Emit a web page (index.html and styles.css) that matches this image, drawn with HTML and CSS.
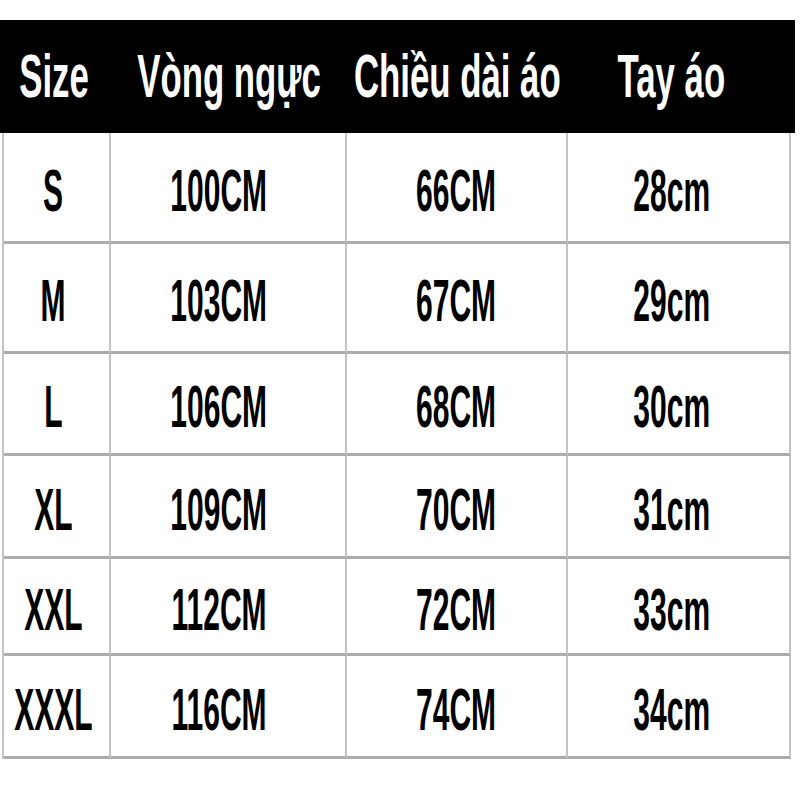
FILE: index.html
```html
<!DOCTYPE html>
<html lang="vi">
<head>
<meta charset="utf-8">
<title>Bảng size</title>
<link rel="stylesheet" href="styles.css">
</head>
<body>
<div class="chart">
  <div class="head">
    <div class="hc c1"><span>Size</span></div>
    <div class="hc c2"><span>Vòng ngực</span></div>
    <div class="hc c3"><span>Chiều dài áo</span></div>
    <div class="hc c4"><span>Tay áo</span></div>
  </div>
  <div class="grid">
    <div class="cell c1"><span>S</span></div>
    <div class="cell c2"><span>100CM</span></div>
    <div class="cell c3"><span>66CM</span></div>
    <div class="cell c4"><span>28cm</span></div>

    <div class="cell c1"><span>M</span></div>
    <div class="cell c2"><span>103CM</span></div>
    <div class="cell c3"><span>67CM</span></div>
    <div class="cell c4"><span>29cm</span></div>

    <div class="cell c1"><span>L</span></div>
    <div class="cell c2"><span>106CM</span></div>
    <div class="cell c3"><span>68CM</span></div>
    <div class="cell c4"><span>30cm</span></div>

    <div class="cell c1"><span>XL</span></div>
    <div class="cell c2"><span>109CM</span></div>
    <div class="cell c3"><span>70CM</span></div>
    <div class="cell c4"><span>31cm</span></div>

    <div class="cell c1"><span>XXL</span></div>
    <div class="cell c2"><span>112CM</span></div>
    <div class="cell c3"><span>72CM</span></div>
    <div class="cell c4"><span>33cm</span></div>

    <div class="cell c1"><span>XXXL</span></div>
    <div class="cell c2"><span>116CM</span></div>
    <div class="cell c3"><span>74CM</span></div>
    <div class="cell c4"><span>34cm</span></div>
  </div>
</div>
</body>
</html>
```

FILE: styles.css
```css
* { box-sizing: border-box; }

body {
  margin: 0;
  background: #fff;
  font-family: "Liberation Sans", Arial, sans-serif;
}

.chart {
  padding-top: 20px;
}

.head {
  display: grid;
  grid-template-columns: 111px 236px 221px 227px;
  width: 795px;
  height: 113px;
  background: #000;
}

.hc {
  display: flex;
  align-items: center;
  justify-content: center;
  color: #fff;
  font-size: 61px;
  font-weight: 700;
  line-height: 1;
  white-space: nowrap;
}

.hc span {
  display: inline-block;
  flex-shrink: 0;
  transform: scaleX(0.57);
}

.hc.c1 { padding-right: 3px; }
.hc.c4 { padding-right: 21px; }

.grid {
  display: grid;
  margin-left: 2px;
  width: 789px;
  border-left: 2px solid #c4c4c4;
  grid-template-columns: 107px 236px 221px 223px;
  grid-template-rows: 111px 110px 102px 103px 97px 103px;
}

.cell {
  display: flex;
  align-items: center;
  justify-content: center;
  padding-top: 7px;
  border-right: 2px solid #c4c4c4;
  border-bottom: 3px solid #acacac;
  color: #000;
  font-size: 60px;
  font-weight: 700;
  line-height: 1;
  white-space: nowrap;
}

.cell span {
  display: inline-block;
  flex-shrink: 0;
  transform: scaleX(0.5);
}

.cell.c1 { padding-right: 7px; }
.cell.c2 { padding-right: 18px; }
.cell.c4 { padding-right: 13px; }
```
